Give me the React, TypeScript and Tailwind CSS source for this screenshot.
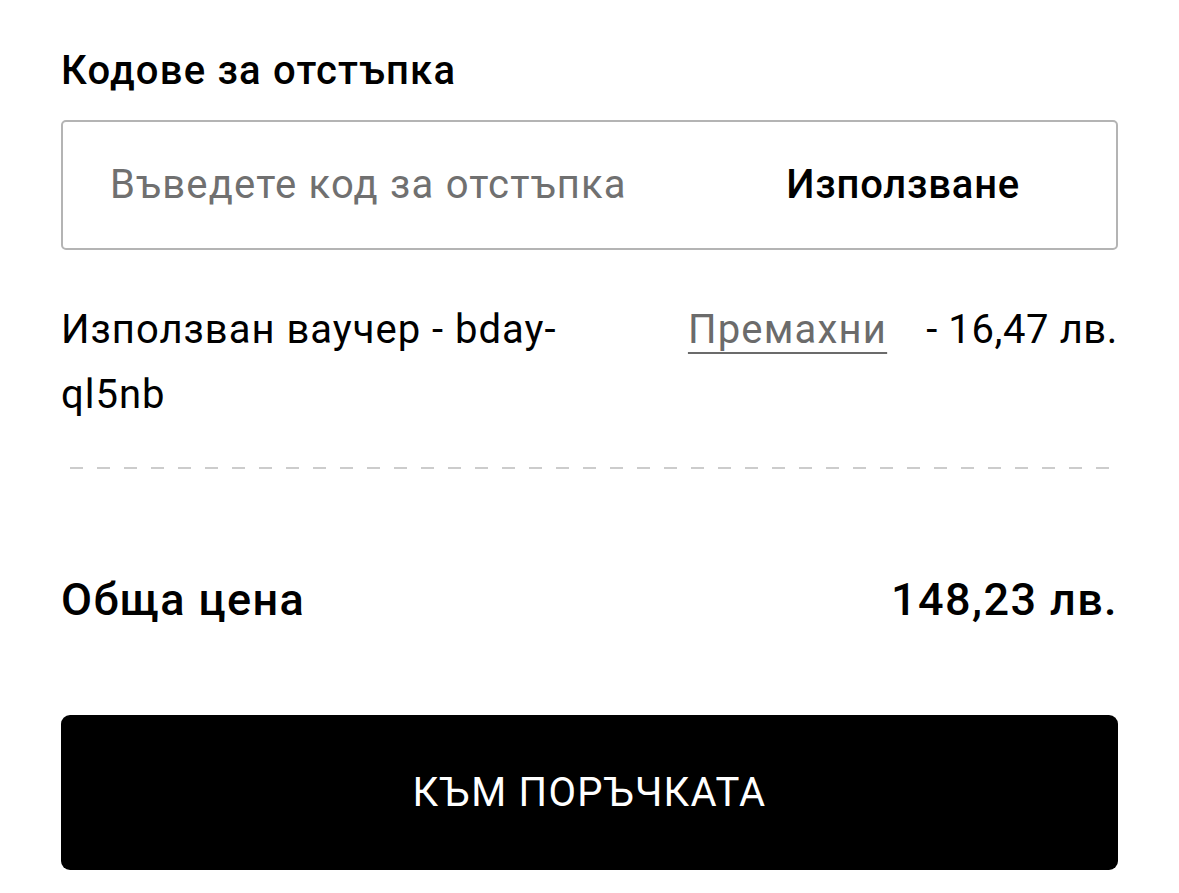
export default function App() {
  return (
    <div className="min-h-screen w-full bg-white text-black" style={{ fontFamily: 'Roboto, "Noto Sans", sans-serif' }}>
      <div className="px-[61px] pt-[47px]">
        <h2 className="text-[40px] leading-[47px] font-medium tracking-[1.2px]">Кодове за отстъпка</h2>

        <div className="mt-[26px] flex h-[130px] items-center justify-between rounded-[5px] border-2 border-[#b4b4b4] pl-[47px] pr-[96px]">
          <span className="text-[40px] tracking-[1.2px] text-[#707070]">Въведете код за отстъпка</span>
          <span className="text-[40px] font-medium tracking-[0.8px]">Използване</span>
        </div>

        <div className="mt-[47px] flex items-start gap-[40px]">
          <div className="flex-1 text-[40px] leading-[65px] tracking-[1px]">Използван ваучер - bday-ql5nb</div>
          <div className="flex shrink-0 items-start gap-[39px] text-[40px] leading-[65px]">
            <span className="tracking-[1.2px] text-[#6b6b6b] underline decoration-2 underline-offset-[9px]">Премахни</span>
            <span className="tracking-[0.6px]">- 16,47 лв.</span>
          </div>
        </div>

        <div className="mt-[40px] ml-[9px] mr-[8px] h-[2px] bg-[linear-gradient(to_right,#cccccc_13px,transparent_13px)] bg-[length:27px_2px] bg-repeat-x" />

        <div className="mt-[104px] flex items-center justify-between text-[45px] font-medium leading-[54px] tracking-[1.4px]">
          <span>Обща цена</span>
          <span>148,23 лв.</span>
        </div>

        <button className="mt-[88px] flex h-[155px] w-full items-center justify-center rounded-[9px] bg-black text-[40px] tracking-[1.3px] text-white">
          КЪМ ПОРЪЧКАТА
        </button>
      </div>
    </div>
  );
}
